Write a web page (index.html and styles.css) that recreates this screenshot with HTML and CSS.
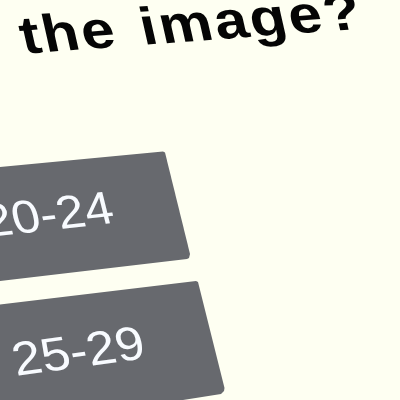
FILE: index.html
```
<!DOCTYPE html>
<html lang="en">
<head>
<meta charset="utf-8">
<title>Question</title>
<link rel="stylesheet" href="styles.css">
</head>
<body>
<main class="quiz">
<h1 class="question"><span class="question-text">the image?</span></h1>
<button class="option option-first"><span class="label label-first">20-24</span></button>
<button class="option option-second"><span class="label label-second">25-29</span></button>
</main>
</body>
</html>
```
FILE: styles.css
```
body {
  margin: 0;
  background: #fefff2;
  overflow: hidden;
}
.quiz {
  width: 400px;
  height: 400px;
  display: grid;
  grid-template-rows: 150px 131px 119px;
  overflow: hidden;
  font-family: "Liberation Sans", Arial, sans-serif;
}
.question {
  margin: 0;
  padding: 10.2px 0 0 13.6px;
  font-size: 55px;
  line-height: 55px;
  letter-spacing: 2.2px;
  word-spacing: 4.5px;
  color: #050505;
}
.question-text,
.label {
  display: block;
  width: max-content;
  white-space: nowrap;
  transform-origin: 0 0;
}
.question-text {
  transform: matrix(1.08, -0.08, 0.215, 0.95, 0, 0);
}
.option {
  display: flex;
  align-items: flex-start;
  margin: 0;
  padding: 0;
  border: 0;
  background: #67696e;
  color: #f8fbff;
  font: 48px/48px "Liberation Sans", Arial, sans-serif;
}
.option-first {
  clip-path: polygon(0 17px, 163px 1.5px, 165px 2.5px, 190px 104px, 189px 108px, 187px 109px, 0 131px);
}
.option-second {
  clip-path: polygon(0 23.5px, 196px 0, 198px 1px, 224.5px 107px, 224px 110px, 221px 113px, 183px 119px, 0 119px);
}
.label-first {
  margin: 48.8px 0 0 -22px;
  transform: matrix(1.05, -0.117, 0.235, 0.95, 0, 0);
}
.label-second {
  margin: 56.3px 0 0 7.2px;
  transform: matrix(1.07, -0.146, 0.23, 0.97, 0, 0);
}
```
